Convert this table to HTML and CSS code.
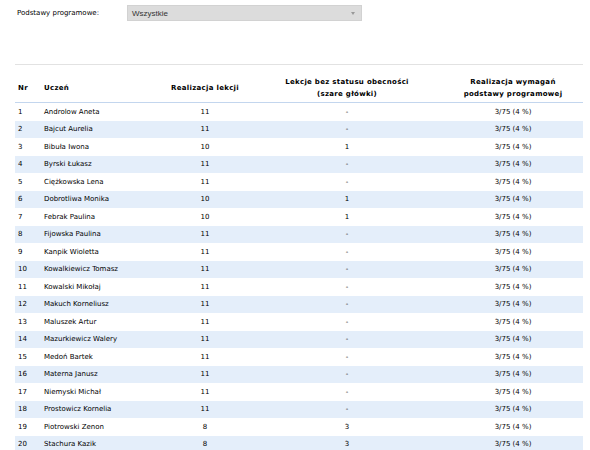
FILE: index.html
```html
<!DOCTYPE html>
<html lang="pl">
<head>
<meta charset="utf-8">
<link rel="stylesheet" href="styles.css">
</head>
<body>
<div class="page">
  <div class="filter">
    <label class="filter-label">Podstawy programowe:</label>
    <div class="select">
      <span>Wszystkie</span>
      <span class="arrow"></span>
    </div>
  </div>
  <div class="rule"></div>
  <div class="table">
    <div class="row head">
      <div class="c nr">Nr</div>
      <div class="c name">Uczeń</div>
      <div class="c mid">Realizacja lekcji</div>
      <div class="c mid">Lekcje bez statusu obecności<br>(szare główki)</div>
      <div class="c mid last">Realizacja wymagań<br>podstawy programowej</div>
    </div>
    <div class="row"><div class="c nr">1</div><div class="c name">Androlow Aneta</div><div class="c mid">11</div><div class="c mid">-</div><div class="c mid last">3/75 (4 %)</div></div>
    <div class="row alt"><div class="c nr">2</div><div class="c name">Bajcut Aurelia</div><div class="c mid">11</div><div class="c mid">-</div><div class="c mid last">3/75 (4 %)</div></div>
    <div class="row"><div class="c nr">3</div><div class="c name">Bibuła Iwona</div><div class="c mid">10</div><div class="c mid">1</div><div class="c mid last">3/75 (4 %)</div></div>
    <div class="row alt"><div class="c nr">4</div><div class="c name">Byrski Łukasz</div><div class="c mid">11</div><div class="c mid">-</div><div class="c mid last">3/75 (4 %)</div></div>
    <div class="row"><div class="c nr">5</div><div class="c name">Ciężkowska Lena</div><div class="c mid">11</div><div class="c mid">-</div><div class="c mid last">3/75 (4 %)</div></div>
    <div class="row alt"><div class="c nr">6</div><div class="c name">Dobrotliwa Monika</div><div class="c mid">10</div><div class="c mid">1</div><div class="c mid last">3/75 (4 %)</div></div>
    <div class="row"><div class="c nr">7</div><div class="c name">Febrak Paulina</div><div class="c mid">10</div><div class="c mid">1</div><div class="c mid last">3/75 (4 %)</div></div>
    <div class="row alt"><div class="c nr">8</div><div class="c name">Fijowska Paulina</div><div class="c mid">11</div><div class="c mid">-</div><div class="c mid last">3/75 (4 %)</div></div>
    <div class="row"><div class="c nr">9</div><div class="c name">Kanpik Wioletta</div><div class="c mid">11</div><div class="c mid">-</div><div class="c mid last">3/75 (4 %)</div></div>
    <div class="row alt"><div class="c nr">10</div><div class="c name">Kowalkiewicz Tomasz</div><div class="c mid">11</div><div class="c mid">-</div><div class="c mid last">3/75 (4 %)</div></div>
    <div class="row"><div class="c nr">11</div><div class="c name">Kowalski Mikołaj</div><div class="c mid">11</div><div class="c mid">-</div><div class="c mid last">3/75 (4 %)</div></div>
    <div class="row alt"><div class="c nr">12</div><div class="c name">Makuch Korneliusz</div><div class="c mid">11</div><div class="c mid">-</div><div class="c mid last">3/75 (4 %)</div></div>
    <div class="row"><div class="c nr">13</div><div class="c name">Maluszek Artur</div><div class="c mid">11</div><div class="c mid">-</div><div class="c mid last">3/75 (4 %)</div></div>
    <div class="row alt"><div class="c nr">14</div><div class="c name">Mazurkiewicz Walery</div><div class="c mid">11</div><div class="c mid">-</div><div class="c mid last">3/75 (4 %)</div></div>
    <div class="row"><div class="c nr">15</div><div class="c name">Medoń Bartek</div><div class="c mid">11</div><div class="c mid">-</div><div class="c mid last">3/75 (4 %)</div></div>
    <div class="row alt"><div class="c nr">16</div><div class="c name">Materna Janusz</div><div class="c mid">11</div><div class="c mid">-</div><div class="c mid last">3/75 (4 %)</div></div>
    <div class="row"><div class="c nr">17</div><div class="c name">Niemyski Michał</div><div class="c mid">11</div><div class="c mid">-</div><div class="c mid last">3/75 (4 %)</div></div>
    <div class="row alt"><div class="c nr">18</div><div class="c name">Prostowicz Kornelia</div><div class="c mid">11</div><div class="c mid">-</div><div class="c mid last">3/75 (4 %)</div></div>
    <div class="row"><div class="c nr">19</div><div class="c name">Piotrowski Zenon</div><div class="c mid">8</div><div class="c mid">3</div><div class="c mid last">3/75 (4 %)</div></div>
    <div class="row alt"><div class="c nr">20</div><div class="c name">Stachura Kazik</div><div class="c mid">8</div><div class="c mid">3</div><div class="c mid last">3/75 (4 %)</div></div>
  </div>
</div>
</body>
</html>
```
FILE: styles.css
```css
* { box-sizing: border-box; }
html, body { margin: 0; padding: 0; background: #fff; }
body {
  font-family: "DejaVu Sans", Verdana, sans-serif;
  font-size: 7px;
  color: #000;
}
.page { padding: 5px 7px 0 15px; }
.filter { display: flex; align-items: center; height: 16px; }
.filter-label { width: 112px; padding-left: 2px; color: #000; }
.select {
  width: 235px;
  height: 16px;
  background: #dcdcdc;
  border: 1px solid #d2d2d2;
  display: flex;
  align-items: center;
  justify-content: space-between;
  padding: 0 6px 0 4px;
  font-family: "Liberation Sans", Arial, sans-serif;
  font-size: 8px;
  color: #333;
}
.arrow {
  width: 0; height: 0;
  border-left: 2.5px solid transparent;
  border-right: 2.5px solid transparent;
  border-top: 3px solid #999;
}
.rule { height: 1px; background: #e2e2e2; margin-top: 43px; }
.table { width: 568px; margin-top: 6px; }
.row {
  display: grid;
  grid-template-columns: 29px 98px 126px 158px 157px;
  height: 17.5px;
  align-items: center;
}
.row.alt { background: #e4eefa; }
.row.head {
  height: 32px;
  padding-top: 2px;
  font-weight: bold;
  letter-spacing: 0.3px;
  line-height: 12px;
  border-bottom: 1px solid #c3d6ee;
}
.c { white-space: nowrap; }
.nr { padding-left: 3px; }
.mid { text-align: center; }
.last { padding-left: 17px; }
```
